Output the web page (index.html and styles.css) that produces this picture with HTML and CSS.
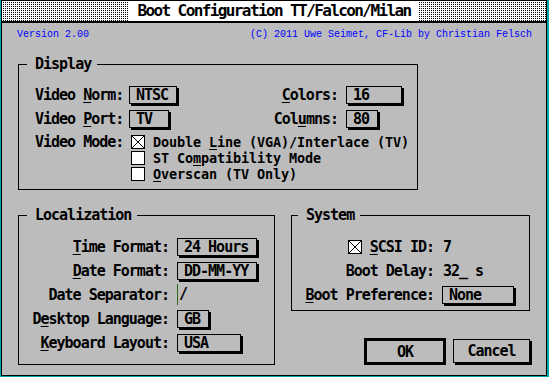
FILE: index.html
```html
<!DOCTYPE html>
<html lang="en">
<head>
    <meta charset="UTF-8">
    <title>Boot Configuration TT/Falcon/Milan</title>
    <link rel="stylesheet" href="styles.css">
</head>
<body>

<div class="window">
    <div class="titlebar">
        <div class="title">Boot Configuration TT/Falcon/Milan</div>
    </div>

    <div class="work">
        <div class="info">
            <span>Version 2.00</span>
            <span>(C) 2011 Uwe Seimet, CF-Lib by Christian Felsch</span>
        </div>

        <fieldset class="group display">
            <legend>Display</legend>
            <div class="display-grid">
                <span class="label">Video <u>N</u>orm:</span>
                <span class="cell"><span class="btn w4">NTSC</span></span>
                <span class="label end"><u>C</u>olors:</span>
                <span class="cell"><span class="btn w5">16</span></span>

                <span class="label">Video <u>P</u>ort:</span>
                <span class="cell"><span class="btn w3">TV</span></span>
                <span class="label end">Col<u>u</u>mns:</span>
                <span class="cell"><span class="btn w2">80</span></span>

                <span class="label mode">Video Mode:</span>
                <div class="checks">
                    <div class="check-row">
                        <span class="box"><svg width="12" height="12" viewBox="0 0 12 12"><path d="M0 0L12 12M12 0L0 12" stroke="#000" stroke-width="1"/></svg></span>
                        <span>Double <u>L</u>ine (VGA)/Interlace (TV)</span>
                    </div>
                    <div class="check-row">
                        <span class="box"></span>
                        <span>ST Co<u>m</u>patibility Mode</span>
                    </div>
                    <div class="check-row">
                        <span class="box"></span>
                        <span><u>O</u>verscan (TV Only)</span>
                    </div>
                </div>
            </div>
        </fieldset>

        <div class="lower">
            <fieldset class="group local">
                <legend>Localization</legend>
                <div class="local-grid">
                    <span class="label end"><u>T</u>ime Format:</span>
                    <span class="cell"><span class="btn w8">24 Hours</span></span>

                    <span class="label end"><u>D</u>ate Format:</span>
                    <span class="cell"><span class="btn w8">DD-MM-YY</span></span>

                    <span class="label end">Date Separator:</span>
                    <span class="cell"><span class="field">/</span></span>

                    <span class="label end">D<u>e</u>sktop Language:</span>
                    <span class="cell"><span class="btn w2">GB</span></span>

                    <span class="label end"><u>K</u>eyboard Layout:</span>
                    <span class="cell"><span class="btn w6">USA</span></span>
                </div>
            </fieldset>

            <div class="side">
                <fieldset class="group system">
                    <legend>System</legend>
                    <div class="system-grid">
                        <span class="label end scsi">
                            <span class="box"><svg width="12" height="12" viewBox="0 0 12 12"><path d="M0 0L12 12M12 0L0 12" stroke="#000" stroke-width="1"/></svg></span>
                            <span><u>S</u>CSI ID:</span>
                        </span>
                        <span class="cell value">7</span>

                        <span class="label end">Boot Delay:</span>
                        <span class="cell value">32_ s</span>

                        <span class="label end"><u>B</u>oot Preference:</span>
                        <span class="cell"><span class="btn w7">None</span></span>
                    </div>
                </fieldset>

                <div class="actions">
                    <button class="exit default">OK</button>
                    <button class="exit">Cancel</button>
                </div>
            </div>
        </div>
    </div>
</div>

</body>
</html>
```

FILE: styles.css
```css
html, body {
    margin: 0;
    padding: 0;
    background-color: #00a8a8;
}
body {
    font-family: 'DejaVu Sans Mono', 'Liberation Mono', monospace;
    font-weight: bold;
    font-size: 15px;
    letter-spacing: -1px;
    line-height: 16px;
    color: #000;
}
u {
    text-underline-offset: 2px;
}
.window {
    margin-left: 1px;
    width: 546px;
    height: 376px;
    box-sizing: border-box;
    border: 1px solid #000;
    background-color: #bcbcbc;
    display: flex;
    flex-direction: column;
}

/* barre de titre */
.titlebar {
    height: 20px;
    border-bottom: 2px solid #000;
    background-color: #000;
    background-image: linear-gradient(90deg, #fff 1px, transparent 1px), linear-gradient(#fff 1px, #000 1px);
    background-size: 2px 2px;
    display: flex;
    justify-content: center;
}
.title {
    background-color: #fff;
    padding: 0 8px;
    line-height: 20px;
    font-size: 16px;
    letter-spacing: -1.6px;
}

.work {
    flex: 1;
    padding-top: 7px;
}
.info {
    display: flex;
    justify-content: space-between;
    padding: 0 14px 0 15px;
    font-family: 'Liberation Mono', monospace;
    font-weight: normal;
    font-size: 10px;
    letter-spacing: 0;
    line-height: 10px;
    color: #0000ff;
}

/* groupes */
.group {
    margin: 0;
    min-width: 0;
    box-sizing: border-box;
    border: 1px solid #000;
    padding: 0 8px 2px;
}
.group legend {
    padding: 0 6px 0 8px;
    line-height: 16px;
}
.display {
    margin: 16px 0 0 16px;
    width: 400px;
    padding-bottom: 7px;
}
.lower {
    display: flex;
    gap: 16px;
    margin: 17px 0 0 16px;
}
.local {
    width: 257px;
}
.side {
    width: 239px;
    display: flex;
    flex-direction: column;
}
.system {
    padding: 0 8px 3px 6px;
}

/* grilles */
.display-grid {
    display: grid;
    grid-template-columns: 94px 123px 94px auto;
    grid-template-rows: 24px 24px auto;
    padding: 11px 0 0 8px;
}
.local-grid {
    display: grid;
    grid-template-columns: 150px auto;
    grid-auto-rows: 24px;
    padding-top: 12px;
}
.system-grid {
    display: grid;
    grid-template-columns: 144px auto;
    grid-auto-rows: 24px;
    padding-top: 12px;
}
.label {
    line-height: 24px;
    white-space: pre;
}
.label.end {
    text-align: right;
    padding-right: 8px;
}
.label.mode {
    line-height: 16px;
    margin-top: 3px;
}
.cell {
    display: flex;
    align-items: center;
    white-space: pre;
}
.value {
    padding-left: 1px;
}

/* boutons */
.btn {
    display: block;
    height: 18px;
    box-sizing: border-box;
    border: 1px solid #000;
    box-shadow: 2px 2px 0 #000;
    padding-left: 6px;
    line-height: 16px;
}
.w2 { width: 32px; }
.w3 { width: 40px; }
.w4 { width: 48px; }
.w5 { width: 56px; }
.w6 { width: 64px; }
.w7 { width: 72px; }
.w8 { width: 80px; }

.field {
    align-self: flex-start;
    margin-top: 1px;
    height: 21px;
    line-height: 21px;
    border-left: 1px solid #2a6a1a;
    padding-left: 1px;
}

/* cases a cocher */
.checks {
    grid-column: 2 / 5;
    margin-top: 3px;
}
.check-row {
    display: flex;
    align-items: center;
    gap: 8px;
    height: 16px;
    white-space: pre;
    font-size: 13.5px;
    letter-spacing: -0.13px;
}
.box {
    display: block;
    flex: none;
    width: 14px;
    height: 14px;
    box-sizing: border-box;
    border: 1px solid #000;
    background-color: #fff;
    margin-left: 2px;
}
.box svg {
    display: block;
}
.scsi {
    display: flex;
    justify-content: flex-end;
    align-items: center;
    gap: 8px;
}
.scsi .box {
    margin-left: 0;
}

.actions {
    display: flex;
    justify-content: flex-end;
    align-items: flex-start;
    gap: 7px;
    margin-top: 27px;
}
.exit {
    font: inherit;
    letter-spacing: inherit;
    color: #000;
    background-color: #bcbcbc;
    box-sizing: border-box;
    border: 1px solid #000;
    box-shadow: 2px 2px 0 #000;
    width: 77px;
    height: 24px;
    margin-top: 1px;
    padding: 0;
    text-align: center;
}
.exit.default {
    width: 82px;
    height: 27px;
    margin-top: 0;
    border-width: 3px;
    box-shadow: none;
}
```
